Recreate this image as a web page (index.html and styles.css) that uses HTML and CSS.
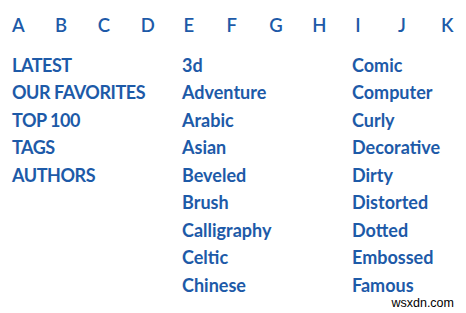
FILE: index.html
```html
<!DOCTYPE html>
<html>
<head>
<meta charset="utf-8">
<link rel="stylesheet" href="styles.css">
</head>
<body>
<div class="page">
  <nav class="letters">
    <a>A</a><a>B</a><a>C</a><a>D</a><a>E</a><a>F</a><a>G</a><a>H</a><a>I</a><a>J</a><a>K</a>
  </nav>
  <div class="lists">
    <ul class="col caps">
      <li>LATEST</li>
      <li>OUR FAVORITES</li>
      <li>TOP 100</li>
      <li>TAGS</li>
      <li>AUTHORS</li>
    </ul>
    <ul class="col">
      <li>3d</li>
      <li>Adventure</li>
      <li>Arabic</li>
      <li>Asian</li>
      <li>Beveled</li>
      <li>Brush</li>
      <li>Calligraphy</li>
      <li>Celtic</li>
      <li>Chinese</li>
    </ul>
    <ul class="col">
      <li>Comic</li>
      <li>Computer</li>
      <li>Curly</li>
      <li>Decorative</li>
      <li>Dirty</li>
      <li>Distorted</li>
      <li>Dotted</li>
      <li>Embossed</li>
      <li>Famous</li>
    </ul>
  </div>
  <div class="watermark">wsxdn.com</div>
</div>
</body>
</html>
```
FILE: styles.css
```css
html, body {
  margin: 0;
  padding: 0;
  background: #ffffff;
}
.page {
  position: relative;
  width: 466px;
  height: 313px;
  overflow: hidden;
  font-family: Lato, "Liberation Sans", sans-serif;
  font-weight: 700;
  font-size: 18px;
  color: #1d5aa8;
  box-sizing: border-box;
  padding: 12px 0 0 12px;
}
.letters {
  display: grid;
  grid-template-columns: repeat(11, 42.9px);
  line-height: 27px;
  font-weight: 600;
  font-size: 18.5px;
}
.lists {
  display: grid;
  grid-template-columns: 170px 170px 1fr;
  margin-top: 12px;
}
.col {
  list-style: none;
  margin: 0;
  padding: 0;
}
.col li {
  line-height: 22px;
  padding: 2.75px 0;
}
.caps {
  letter-spacing: -0.45px;
}
.watermark {
  position: absolute;
  right: 12px;
  bottom: 4px;
  font-family: "Liberation Sans", Arial, sans-serif;
  font-weight: 400;
  font-size: 12.5px;
  line-height: 12.5px;
  color: #000000;
}
```
